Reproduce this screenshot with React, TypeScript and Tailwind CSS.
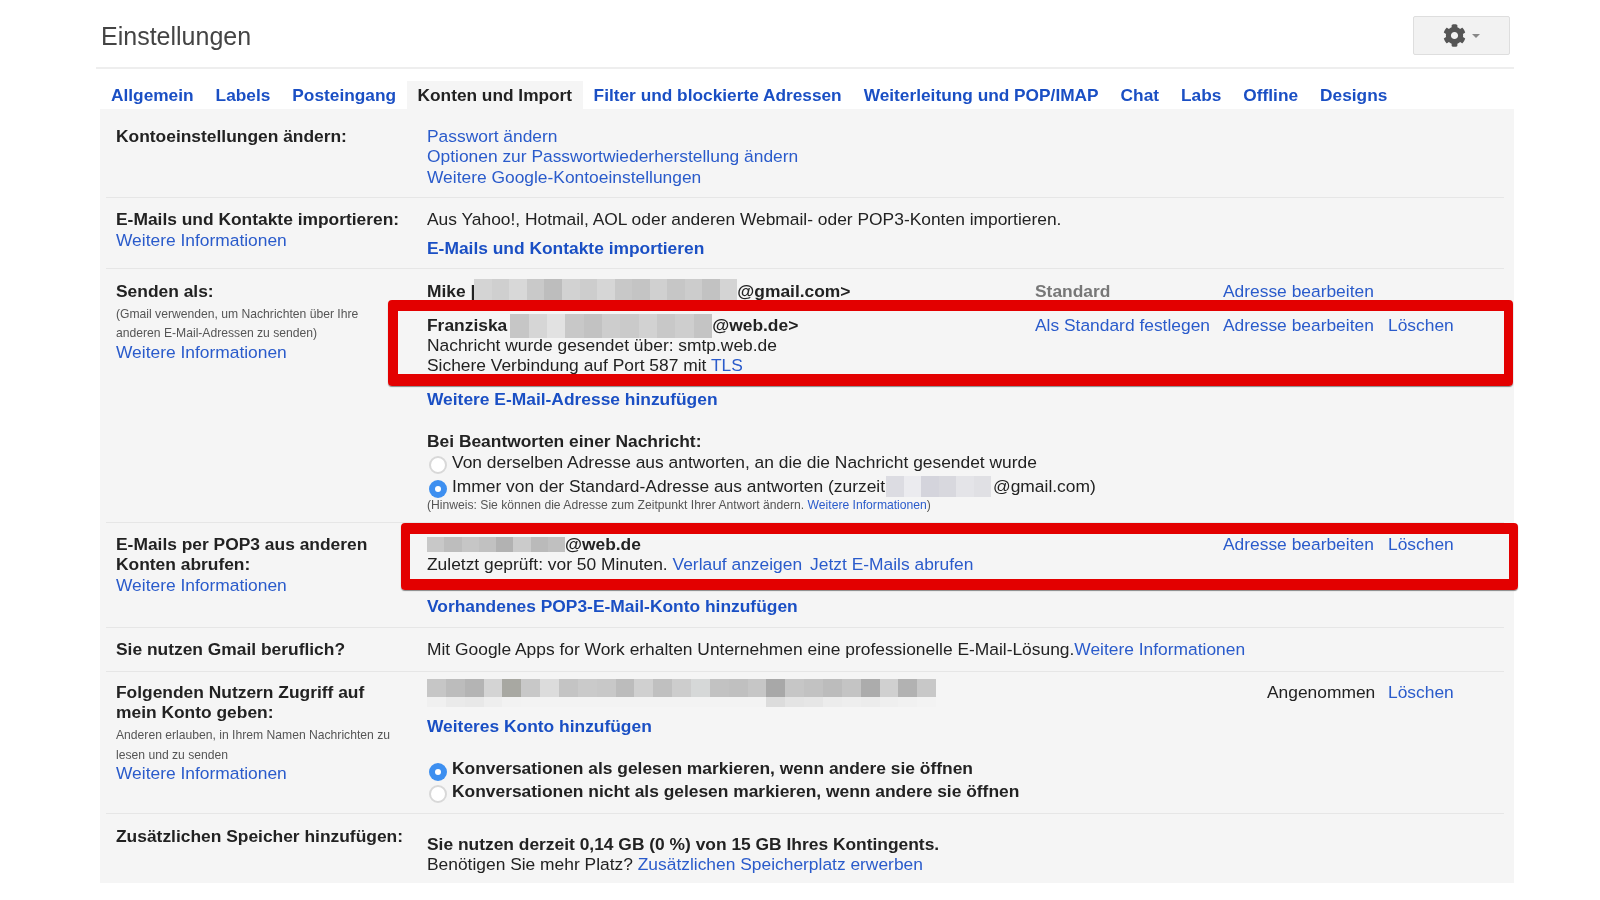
import { FaCog } from "react-icons/fa";

const tabs = ["Allgemein", "Labels", "Posteingang", "Konten und Import", "Filter und blockierte Adressen", "Weiterleitung und POP/IMAP", "Chat", "Labs", "Offline", "Designs"];

// pixelated address blocks in the screenshot
const mikeTiles = ["#d4d4d4", "#cfcfcf", "#d8d8d8", "#c9c9c9", "#bdbdbd", "#d2d2d2", "#cdcdcd", "#d6d6d6", "#c8c8c8", "#c4c4c4", "#d0d0d0", "#c6c6c6", "#cccccc", "#c2c2c2", "#d4d4d4"];
const franziTiles = ["#c6c6c6", "#d6d6d6", "#e2e2e2", "#c8c8c8", "#c2c2c2", "#cdcdcd", "#cacaca", "#d2d2d2", "#c8c8c8", "#cecece", "#c4c4c4"];
const zurzeitTiles = ["#dcdce2", "#ebebef", "#d4d4dc", "#d8d8de", "#e4e4e8", "#e0e0e4"];
const popTiles = ["#c8c8c8", "#bdbdbd", "#c6c6c6", "#c1c1c1", "#b2b2b2", "#cbcbcb", "#bababa", "#c0c0c0"];
const userTiles = ["#c6c6c6", "#bcbcbc", "#b4b4b4", "#d4d4d4", "#a8a8a2", "#c8c8c8", "#dcdcdc", "#c4c4c4", "#cacaca", "#c8c8c8", "#bcbcbc", "#d0d0d0", "#c0c0c0", "#cdcdcd", "#d6d8d8", "#c2c2c2", "#c0c0c0", "#c6c6c6", "#a8a8a8", "#c6c6c6", "#c2c2c2", "#bcbcbc", "#c4c4c4", "#acacac", "#d0d0d0", "#b2b2b2", "#c8c8c8"];
const userFaint = ["#f0f0f0", "#eaeaea", "#e8e8e8", "#eeeeee", "#f2f2f2", "#f3f3f3", "#f3f3f3", "#f3f3f3", "#f3f3f3", "#f3f3f3", "#f3f3f3", "#f3f3f3", "#f3f3f3", "#f3f3f3", "#f3f3f3", "#f3f3f3", "#f3f3f3", "#f3f3f3", "#dcdcdc", "#e4e4e4", "#e6e6e6", "#ececec", "#eeeeee", "#ececec", "#efefef", "#f1f1f1", "#f3f3f3"];

function Mosaic({ tiles, className }: { tiles: string[]; className: string }) {
  return (
    <span className={`flex shrink-0 ${className}`}>
      {tiles.map((c, i) => (
        <span key={i} className="flex-1" style={{ backgroundColor: c }} />
      ))}
    </span>
  );
}

function Link({ children, bold }: { children: React.ReactNode; bold?: boolean }) {
  return <a className={bold ? "font-bold text-[#1a4fc4]" : "text-[#2a5bcb]"}>{children}</a>;
}

function Small({ children }: { children: React.ReactNode }) {
  return <div className="text-[12.15px] leading-[20px] text-[#555]">{children}</div>;
}

function Radio({ on }: { on?: boolean }) {
  return on ? (
    <span className="ml-[2px] flex size-[18px] shrink-0 translate-y-[3px] items-center justify-center rounded-full bg-[#3d8ff0]">
      <span className="size-[6px] rounded-full bg-white" />
    </span>
  ) : (
    <span className="ml-[2px] size-[18px] shrink-0 translate-y-[3px] rounded-full border-2 border-[#d8d8d8] bg-white" />
  );
}

function Row({ label, children, className, last }: { label: React.ReactNode; children: React.ReactNode; className: string; last?: boolean }) {
  return (
    <div className={`ml-[6px] mr-[10px] grid grid-cols-[311px_1fr] pl-[10px] ${last ? "" : "border-b border-[#e6e6e6]"} ${className}`}>
      <div>{label}</div>
      <div>{children}</div>
    </div>
  );
}

function Actions({ a, b, c }: { a?: React.ReactNode; b: React.ReactNode; c?: React.ReactNode }) {
  return (
    <>
      <div className="w-[188px] shrink-0">{a}</div>
      <div className="w-[165px] shrink-0">{b}</div>
      <div>{c}</div>
    </>
  );
}

export default function App() {
  return (
    <div className="h-[900px] w-[1600px] overflow-hidden bg-white pl-[96px] font-['Liberation_Sans',Arial,sans-serif] text-[17.4px] leading-[20.4px] text-[#222] blur-[0.5px]">
      <div className="w-[1418px]">
        <div className="flex h-[69px] items-start justify-between border-b-2 border-[#eeeeee] pl-[5px] pr-[4px]">
          <h1 className="mt-[21px] text-[25px] leading-[30px] text-[#444]">Einstellungen</h1>
          <div className="mt-[16px] flex h-[39px] w-[97px] items-center justify-center gap-[6px] rounded-[2px] border border-[#dedede] bg-[#f2f2f2]">
            <FaCog className="size-[23px] text-[#555]" />
            <span className="mt-[1px] size-0 border-x-[4px] border-t-[4px] border-x-transparent border-t-[#888]" />
          </div>
        </div>

        <div className="mt-[12px] flex h-[28px] pl-[4px] text-[17.3px]">
          {tabs.map((t) =>
            t === "Konten und Import" ? (
              <div key={t} className="bg-[#f5f5f5] px-[10.5px] pt-[4px] font-bold text-[#222]">{t}</div>
            ) : (
              <div key={t} className="px-[11px] pt-[4px] font-bold text-[#1a4fc4]">{t}</div>
            )
          )}
        </div>

        <div className="relative ml-[4px] h-[774px] bg-[#f5f5f5]">
          <Row className="h-[89px] pt-[17px]" label={<b>Kontoeinstellungen ändern:</b>}>
            <div><Link>Passwort ändern</Link></div>
            <div><Link>Optionen zur Passwortwiederherstellung ändern</Link></div>
            <div><Link>Weitere Google-Kontoeinstellungen</Link></div>
          </Row>

          <Row
            className="h-[71px] pt-[11px]"
            label={
              <>
                <b>E-Mails und Kontakte importieren:</b>
                <div className="mt-px"><Link>Weitere Informationen</Link></div>
              </>
            }
          >
            <div>Aus Yahoo!, Hotmail, AOL oder anderen Webmail- oder POP3-Konten importieren.</div>
            <div className="mt-[9px]"><Link bold>E-Mails und Kontakte importieren</Link></div>
          </Row>

          <Row
            className="h-[254px] pt-[12px]"
            label={
              <>
                <b>Senden als:</b>
                <div className="mt-[3px]">
                  <Small>(Gmail verwenden, um Nachrichten über Ihre</Small>
                  <div className="-mt-px"><Small>anderen E-Mail-Adressen zu senden)</Small></div>
                </div>
                <div className="-mt-[1px]"><Link>Weitere Informationen</Link></div>
              </>
            }
          >
            <div className="flex">
              <div className="flex w-[608px] shrink-0 items-center font-bold">
                Mike |<Mosaic tiles={mikeTiles} className="-my-[3px] ml-[-1px] h-[25px] w-[263px]" />@gmail.com&gt;
              </div>
              <Actions a={<b className="text-[#777]">Standard</b>} b={<Link>Adresse bearbeiten</Link>} />
            </div>
            <div className="mt-[14px] flex">
              <div className="flex w-[608px] shrink-0 items-center font-bold">
                Franziska<Mosaic tiles={franziTiles} className="-my-[2px] ml-[3px] h-[24px] w-[202px]" />@web.de&gt;
              </div>
              <Actions a={<Link>Als Standard festlegen</Link>} b={<Link>Adresse bearbeiten</Link>} c={<Link>Löschen</Link>} />
            </div>
            <div className="-mt-px">Nachricht wurde gesendet über: smtp.web.de</div>
            <div>Sichere Verbindung auf Port 587 mit <Link>TLS</Link></div>
            <div className="mt-[13px]"><Link bold>Weitere E-Mail-Adresse hinzufügen</Link></div>
            <div className="mt-[22px] font-bold">Bei Beantworten einer Nachricht:</div>
            <div className="mt-[2px] flex items-start gap-[5px]">
              <Radio />
              <span className="-mt-[1px]">Von derselben Adresse aus antworten, an die die Nachricht gesendet wurde</span>
            </div>
            <div className="mt-[3px] flex items-center gap-[5px]">
              <Radio on />
              <span className="flex items-center">
                Immer von der Standard-Adresse aus antworten (zurzeit
                <Mosaic tiles={zurzeitTiles} className="ml-[1px] mr-[2px] -my-px h-[21px] w-[105px]" />
                @gmail.com)
              </span>
            </div>
            <div className="mt-[3px] text-[12.15px] leading-[12px] text-[#555]">
              (Hinweis: Sie können die Adresse zum Zeitpunkt Ihrer Antwort ändern. <Link>Weitere Informationen</Link>)
            </div>
          </Row>

          <Row
            className="h-[105px] pt-[11px]"
            label={
              <>
                <b>
                  E-Mails per POP3 aus anderen
                  <br />
                  Konten abrufen:
                </b>
                <div><Link>Weitere Informationen</Link></div>
              </>
            }
          >
            <div className="flex">
              <div className="flex w-[608px] shrink-0 items-center font-bold">
                <Mosaic tiles={popTiles} className="h-[15px] w-[138px]" />@web.de
              </div>
              <Actions b={<Link>Adresse bearbeiten</Link>} c={<Link>Löschen</Link>} />
            </div>
            <div>
              Zuletzt geprüft: vor 50 Minuten. <Link>Verlauf anzeigen</Link>
              <span className="ml-[8px]"><Link>Jetzt E-Mails abrufen</Link></span>
            </div>
            <div className="mt-[21px]"><Link bold>Vorhandenes POP3-E-Mail-Konto hinzufügen</Link></div>
          </Row>

          <Row className="h-[44px] pt-[11px]" label={<b>Sie nutzen Gmail beruflich?</b>}>
            Mit Google Apps for Work erhalten Unternehmen eine professionelle E-Mail-Lösung.<Link>Weitere Informationen</Link>
          </Row>

          <Row
            className="h-[142px] pt-[10px]"
            label={
              <>
                <b>
                  Folgenden Nutzern Zugriff auf
                  <br />
                  mein Konto geben:
                </b>
                <div className="mt-[2px]">
                  <Small>Anderen erlauben, in Ihrem Namen Nachrichten zu</Small>
                  <Small>lesen und zu senden</Small>
                </div>
                <div className="-mt-[2px]"><Link>Weitere Informationen</Link></div>
              </>
            }
          >
            <div className="-mt-[3px] flex">
              <div className="w-[840px] shrink-0">
                <Mosaic tiles={userTiles} className="h-[18px] w-[509px]" />
                <Mosaic tiles={userFaint} className="h-[10px] w-[509px]" />
              </div>
              <div className="w-[121px] shrink-0 pt-[3px]">Angenommen</div>
              <div className="pt-[3px]"><Link>Löschen</Link></div>
            </div>
            <div className="mt-[9px]"><Link bold>Weiteres Konto hinzufügen</Link></div>
            <div className="mt-[22px] flex items-center gap-[5px] font-bold">
              <Radio on />
              <span>Konversationen als gelesen markieren, wenn andere sie öffnen</span>
            </div>
            <div className="mt-[2px] flex items-center gap-[5px] font-bold">
              <Radio />
              <span>Konversationen nicht als gelesen markieren, wenn andere sie öffnen</span>
            </div>
          </Row>

          <Row last className="h-[69px] pt-[12px]" label={<b>Zusätzlichen Speicher hinzufügen:</b>}>
            <div className="mt-[8px] font-bold">Sie nutzen derzeit 0,14 GB (0 %) von 15 GB Ihres Kontingents.</div>
            <div>Benötigen Sie mehr Platz? <Link>Zusätzlichen Speicherplatz erwerben</Link></div>
          </Row>

          {/* red annotation boxes drawn over the screenshot */}
          <div className="pointer-events-none absolute left-[288px] top-[191px] h-[86px] w-[1125px] rounded-[4px] border-b-[12px] border-l-[10px] border-r-[9px] border-t-[11px] border-[#e30000] shadow-[0_1px_1px_#888]" />
          <div className="pointer-events-none absolute left-[301px] top-[414px] h-[67px] w-[1117px] rounded-[4px] border-b-[11px] border-l-[9px] border-r-[9px] border-t-[11px] border-[#e30000] shadow-[0_1px_1px_#888]" />
        </div>
      </div>
    </div>
  );
}
